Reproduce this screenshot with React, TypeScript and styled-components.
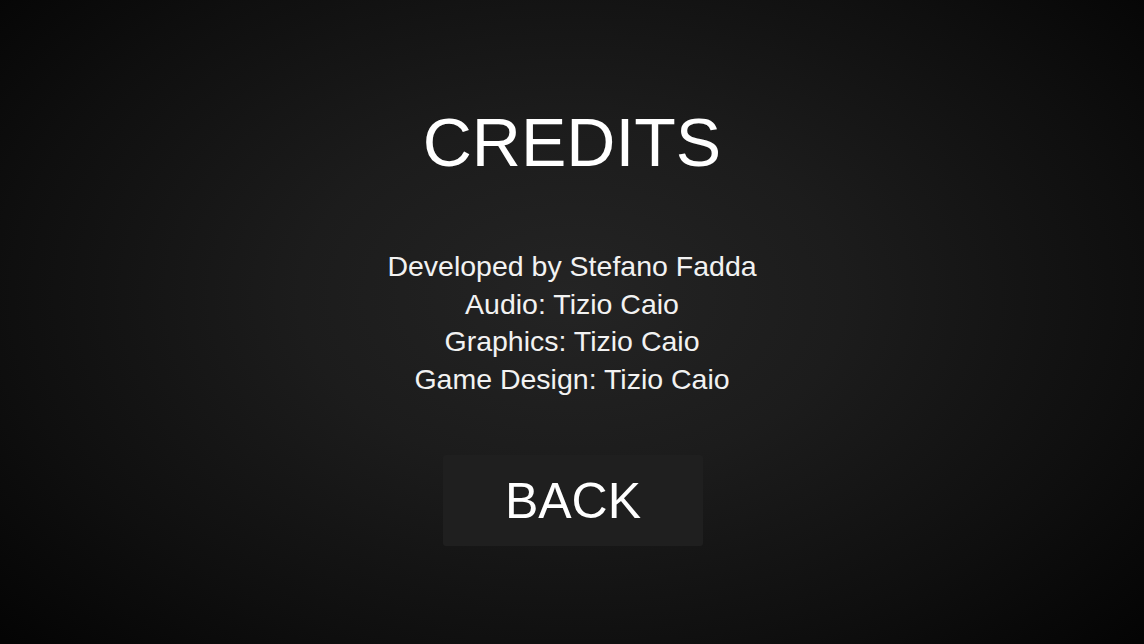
import React from "react";
import styled, { createGlobalStyle } from "styled-components";

const Global = createGlobalStyle`
  html, body { margin: 0; padding: 0; background: #060606; }
  body { font-family: "Liberation Sans", Arial, sans-serif; }
`;

const Screen = styled.div`
  width: 1144px;
  height: 644px;
  overflow: hidden;
  box-sizing: border-box;
  background: radial-gradient(ellipse 68% 78% at 50% 46%, #242424 0%, #1c1c1c 35%, #0f0f0f 72%, #040404 100%);
  display: flex;
  flex-direction: column;
  align-items: center;
  padding-top: 100px;
  color: #ffffff;
`;

const Title = styled.h1`
  margin: 0;
  font-size: 68px;
  font-weight: 400;
  line-height: 84px;
  letter-spacing: 0;
`;

const Credits = styled.div`
  margin-top: 64px;
  display: flex;
  flex-direction: column;
  align-items: center;
`;

const Line = styled.div`
  font-size: 28.5px;
  line-height: 37.6px;
  color: #f2f2f2;
`;

const BackButton = styled.button`
  margin-top: 57px;
  margin-left: 2px;
  width: 260px;
  height: 91px;
  border: none;
  border-radius: 3px;
  background: #1f1f1f;
  color: #ffffff;
  font-family: "Liberation Sans", Arial, sans-serif;
  font-size: 50px;
  padding: 0;
  cursor: pointer;
`;

export default function App() {
  return (
    <>
      <Global />
      <Screen>
        <Title>CREDITS</Title>
        <Credits>
          <Line>Developed by Stefano Fadda</Line>
          <Line>Audio: Tizio Caio</Line>
          <Line>Graphics: Tizio Caio</Line>
          <Line>Game Design: Tizio Caio</Line>
        </Credits>
        <BackButton>BACK</BackButton>
      </Screen>
    </>
  );
}
